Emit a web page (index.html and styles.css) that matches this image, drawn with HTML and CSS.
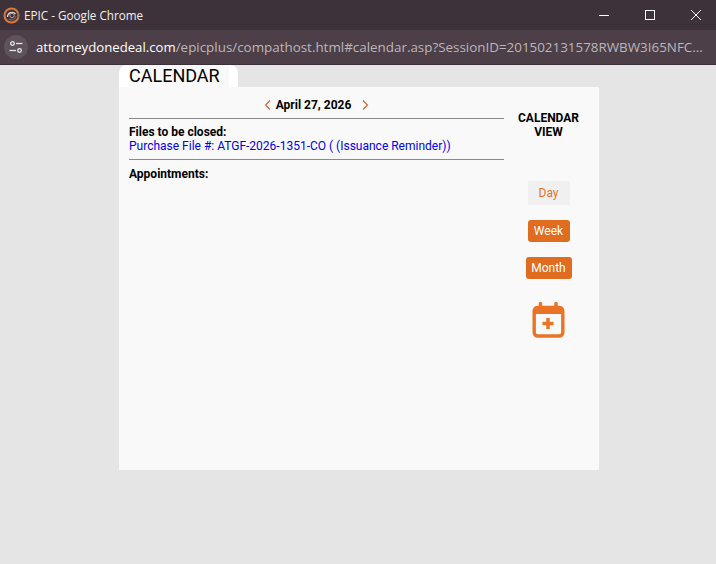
FILE: index.html
```html
<!DOCTYPE html>
<html lang="en">
<head>
<meta charset="utf-8">
<title>EPIC - Google Chrome</title>
<link rel="stylesheet" href="styles.css">
</head>
<body>
<header class="titlebar">
  <svg class="logo" viewBox="0 0 17 17" width="17" height="17" fill="none">
    <circle cx="8.500" cy="8.500" r="7" stroke="#d9793f" stroke-width="2"/>
    <path d="M15 6a7 7 0 0 1 0 5" stroke="#8a6a58" stroke-width="2"/>
    <path d="M4.500 10a4.500 4.500 0 0 1 8-3" stroke="#e9d8cc" stroke-width="1.200"/>
    <path d="M13 9a4.500 4.500 0 0 1-7 3" stroke="#8c6350" stroke-width="1.200"/>
    <circle cx="9" cy="8.500" r="2.200" stroke="#b8a195" stroke-width="1"/>
  </svg>
  <span class="title">EPIC - Google Chrome</span>
  <div class="win-controls">
    <svg width="10" height="10" viewBox="0 0 10 10"><path d="M0 5.500h10" stroke="#fff" stroke-width="1"/></svg>
    <svg width="10" height="10" viewBox="0 0 10 10"><rect x=".5" y=".5" width="9" height="9" fill="none" stroke="#fff" stroke-width="1"/></svg>
    <svg width="10" height="10" viewBox="0 0 10 10"><path d="M0 0l10 10M10 0L0 10" stroke="#fff" stroke-width="1"/></svg>
  </div>
</header>
<div class="addressbar">
  <span class="site-btn">
    <svg width="16" height="14" viewBox="0 0 16 14" fill="none" stroke="#e8e4e6" stroke-width="1.300">
      <circle cx="4.500" cy="3.500" r="1.800"/><path d="M8 3.500h6.500"/>
      <circle cx="11.500" cy="10.500" r="1.800"/><path d="M1.500 10.500h6.500"/>
    </svg>
  </span>
  <span class="url"><span class="host">attorneydonedeal.com</span><span class="path">/epicplus/compathost.html#calendar.asp?SessionID=201502131578RWBW3I65NFC...</span></span>
</div>
<main class="page">
  <section class="panel">
    <div class="tab"><span class="tab-label">CALENDAR</span></div>
    <div class="card">
      <div class="content">
        <div class="date-nav">
          <svg class="chev" width="7" height="10" viewBox="0 0 7 10"><path d="M6 .5L1.500 5 6 9.500" fill="none" stroke="#d9622b" stroke-width="1.100"/></svg>
          <span class="date">April 27, 2026</span>
          <svg class="chev" width="7" height="10" viewBox="0 0 7 10"><path d="M1 .5L5.500 5 1 9.500" fill="none" stroke="#d9622b" stroke-width="1.100"/></svg>
        </div>
        <hr class="rule">
        <div class="files">
          <div class="label">Files to be closed:</div>
          <a class="link" href="#">Purchase File #: ATGF-2026-1351-CO ( (Issuance Reminder))</a>
        </div>
        <hr class="rule">
        <div class="label appts">Appointments:</div>
      </div>
      <aside class="side">
        <div class="side-title">CALENDAR<br>VIEW</div>
        <span class="btn btn-day">Day</span>
        <span class="btn btn-week">Week</span>
        <span class="btn btn-month">Month</span>
        <svg class="add" width="34" height="38" viewBox="0 0 34 38" fill="none">
          <path d="M8.500 2.500v5M24 2.500v5" stroke="#ea7425" stroke-width="3.500" stroke-linecap="round"/>
          <rect x="2.200" y="6.500" width="28.600" height="28.500" rx="3.500" stroke="#ea7425" stroke-width="3.400"/>
          <path d="M2 8a3 3 0 0 1 3-3h23a3 3 0 0 1 3 3V13H2z" fill="#ea7425"/>
          <path d="M16 17v11M10.500 22.500h11" stroke="#ea7425" stroke-width="3.500"/>
        </svg>
      </aside>
    </div>
  </section>
</main>
</body>
</html>
```
FILE: styles.css
```css
* { box-sizing: border-box; }
html, body { margin: 0; height: 100%; }
body {
  width: 716px;
  height: 564px;
  overflow: hidden;
  background: #e5e5e5;
  font-family: Roboto, "Liberation Sans", sans-serif;
  display: flex;
  flex-direction: column;
}
.titlebar {
  height: 30px;
  background: #3e323a;
  display: flex;
  align-items: center;
  padding: 0 15px 0 3px;
  color: #f2eff0;
  flex: none;
}
.logo { flex: none; }
.title {
  margin-left: 4px;
  font: 11.700px "Open Sans", "Liberation Sans", sans-serif;
}
.win-controls { margin-left: auto; display: flex; gap: 36px; }
.win-controls svg { display: block; }
.addressbar {
  height: 35px;
  background: #4c3f48;
  border-bottom: 1px solid #3c3138;
  display: flex;
  align-items: center;
  padding-left: 4px;
  flex: none;
}
.site-btn {
  width: 24px;
  height: 24px;
  border-radius: 50%;
  background: #5f535b;
  display: flex;
  align-items: center;
  justify-content: center;
  flex: none;
}
.url {
  margin-left: 8px;
  font: 13.400px "Open Sans", "Liberation Sans", sans-serif;
  white-space: nowrap;
}
.host { color: #fff; font-size: 13.200px; }
.path { color: #bdb6ba; }
.page { flex: 1; padding-left: 119px; }
.panel { width: 480px; }
.tab {
  width: 119px;
  height: 22px;
  background: #fff;
  border-radius: 8px 8px 0 0;
  padding-left: 10px;
  font-size: 18px;
  line-height: 22px;
  color: #000;
}
.tab-label { display: block; width: 100px; background: #f9f9f9; height: 22px; }
.card {
  height: 383px;
  background: #f9f9f9;
  display: flex;
  padding: 0 0 0 10px;
}
.content { width: 375px; flex: none; }
.date-nav {
  height: 31px;
  display: flex;
  align-items: center;
  justify-content: center;
  gap: 5px;
  padding-top: 5px;
}
.date { font-size: 12px; font-weight: 700; color: #000; margin-right: 6px; }
.rule { margin: 0; border: 0; border-top: 1px solid #8a8a8a; height: 1px; }
.files { padding: 6px 0 6px; font-size: 12px; line-height: 14px; }
.label { font-size: 12px; font-weight: 700; color: #000; line-height: 14px; }
.link { color: #0000ee; text-decoration: none; display: block; }
.appts { margin-top: 7px; }
.side {
  flex: 1;
  display: flex;
  flex-direction: column;
  align-items: center;
  padding-top: 24px;
  padding-right: 6px;
}
.side-title {
  font-size: 12px;
  font-weight: 700;
  line-height: 14px;
  text-align: center;
  color: #000;
  height: 43px;
  white-space: nowrap;
  margin-bottom: 27px;
}
.btn {
  display: block;
  font-size: 12px;
  line-height: 14px;
  text-align: center;
  border-radius: 3px;
}
.btn-day {
  width: 42px;
  padding: 5px 0;
  height: 24px;
  background: #f0f0f0;
  color: #e9702a;
  border-radius: 0;
}
.btn-week, .btn-month {
  background: #e06c20;
  color: #fff;
  height: 22px;
  padding: 4px 0;
}
.btn-week { width: 42px; margin-top: 15px; }
.btn-month { width: 46px; margin-top: 15px; }
.add { margin-top: 22px; display: block; }
```
